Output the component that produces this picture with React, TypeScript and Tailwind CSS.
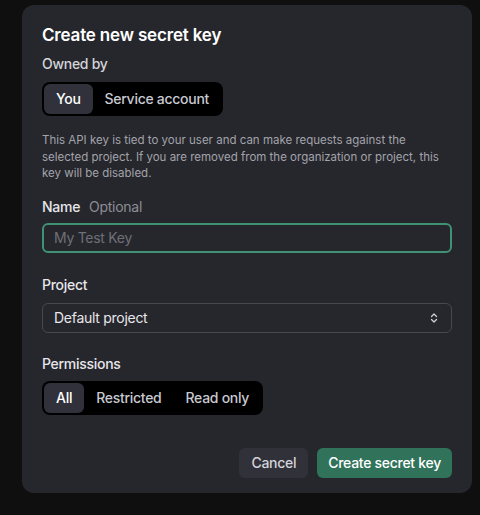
import { useState } from 'react';
import { ChevronsUpDown } from 'lucide-react';

const font = { fontFamily: 'Inter, "Noto Sans", sans-serif' };

function Segmented({
  options,
  value,
  onChange,
}: {
  options: string[];
  value: string;
  onChange: (v: string) => void;
}) {
  return (
    <div className="inline-flex h-[34px] items-stretch rounded-lg bg-black p-[2px]">
      {options.map((opt) => (
        <button
          key={opt}
          onClick={() => onChange(opt)}
          className={
            opt === value
              ? 'rounded-md bg-[#30313a] px-[12px] text-sm font-medium tracking-[-0.02em] text-white'
              : 'rounded-md px-[12px] text-sm font-medium tracking-[-0.02em] text-[#c9c9d1]'
          }
        >
          {opt}
        </button>
      ))}
    </div>
  );
}

export default function App() {
  const [owner, setOwner] = useState('You');
  const [perm, setPerm] = useState('All');
  const [name, setName] = useState('');

  return (
    <div className="h-[515px] w-[480px] bg-[#0f0f10] pt-[5px] pl-[22px]" style={font}>
      <div className="flex h-[488px] w-[450px] flex-col rounded-xl bg-[#26272c] px-5 pt-[18px]">
        <h2 className="text-[17px] font-semibold leading-6 tracking-[-0.01em] text-white">
          Create new secret key
        </h2>

        <div className="mt-[7px] text-sm font-medium tracking-[-0.02em] text-[#d4d4da]">Owned by</div>
        <div className="mt-2">
          <Segmented options={['You', 'Service account']} value={owner} onChange={setOwner} />
        </div>

        <p className="mt-[16px] text-[11.5px] leading-[16.5px] text-[#a3a3ab]">
          This API key is tied to your user and can make requests against the selected project. If
          you are removed from the organization or project, this key will be disabled.
        </p>

        <div className="mt-[15px] flex gap-[9px] text-sm tracking-[-0.02em]">
          <span className="font-medium text-[#e6e6eb]">Name</span>
          <span className="text-[#8d8d96]">Optional</span>
        </div>
        <input
          autoFocus
          value={name}
          onChange={(e) => setName(e.target.value)}
          placeholder="My Test Key"
          className="mt-[6px] h-[30px] w-full rounded-md border-2 border-[#3f9273] bg-transparent px-[10px] text-sm tracking-[-0.02em] text-white caret-white outline-none placeholder:text-[#6f6f78]"
        />

        <div className="mt-[22px] text-sm font-medium tracking-[-0.02em] text-[#e6e6eb]">Project</div>
        <button className="mt-2 flex h-[30px] w-full items-center justify-between rounded-md border border-[#474851] px-[11px] text-sm tracking-[-0.02em] text-[#e6e6eb]">
          <span>Default project</span>
          <ChevronsUpDown size={12} strokeWidth={2.5} className="text-[#d0d0d6]" />
        </button>

        <div className="mt-[21px] text-sm font-medium tracking-[-0.02em] text-[#e6e6eb]">Permissions</div>
        <div className="mt-[7px]">
          <Segmented options={['All', 'Restricted', 'Read only']} value={perm} onChange={setPerm} />
        </div>

        <div className="mt-[33px] flex justify-end gap-[9px]">
          <button className="h-[30px] rounded-md bg-[#303139] px-3 text-sm font-medium tracking-[-0.02em] text-[#d4d4da]">
            Cancel
          </button>
          <button className="h-[30px] rounded-md bg-[#30735a] px-[11px] text-sm font-medium tracking-[-0.02em] text-white">
            Create secret key
          </button>
        </div>
      </div>
    </div>
  );
}
